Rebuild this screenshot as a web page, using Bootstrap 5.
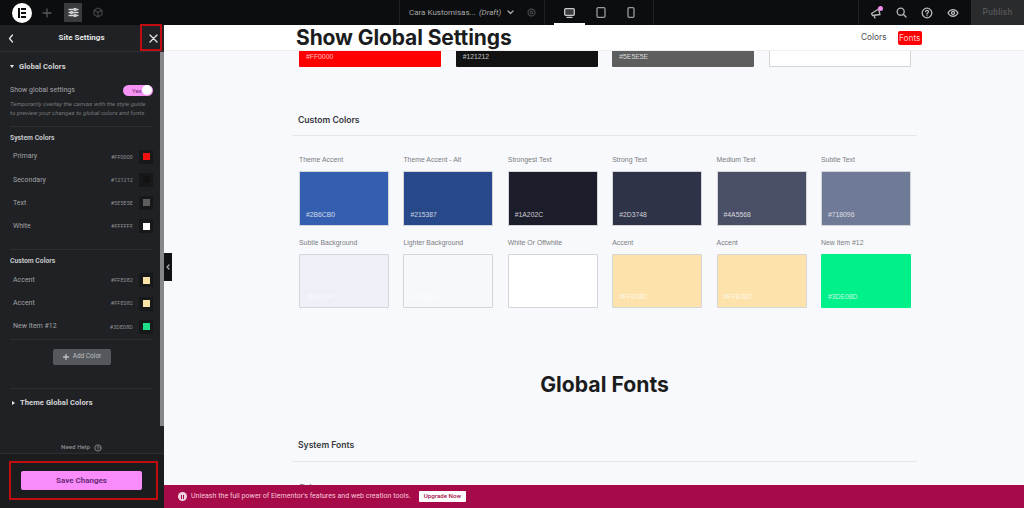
<!doctype html>
<html lang="en">
<head>
<meta charset="utf-8">
<title>Site Settings</title>
<link href="https://cdn.jsdelivr.net/npm/bootstrap@5.3.0/dist/css/bootstrap.min.css" rel="stylesheet">
<style>
html,body{height:508px;overflow:hidden}
body{font-family:Roboto,"Liberation Sans",sans-serif;background:#f8f9fc;display:flex;flex-direction:column}
.topbar{height:25px;background:#0c0d0e;color:#b9babc;flex:none}
.ic{display:block;fill:none;stroke:currentColor;stroke-width:1.3;stroke-linecap:round;stroke-linejoin:round}
.logo-disc{width:20px;height:20px;border-radius:50%;background:#fff;margin-left:12px;padding:5px 6px;display:flex;gap:1.5px}
.logo-disc i{display:block;background:#0c0d0e}
.logo-disc .bar-l{width:2px;height:10px}
.logo-disc .bar-r{width:6px;height:10px;background:repeating-linear-gradient(#0c0d0e 0 2px,#fff 2px 4px)}
.tb-plus{margin-left:10px;color:#55575a}
.tb-active{margin-left:12px;width:18px;height:19px;background:#3a3b3d;color:#d5d6d8;display:flex;align-items:center;justify-content:center}
.tb-layers{margin-left:11px;color:#3f4144}
.tb-title{margin-left:auto;width:146px;height:25px;border-left:1px solid #1e1f21;border-right:1px solid #1e1f21;padding-left:9px;font-size:8px;color:#a8a9ab;white-space:nowrap}
.tb-title em{margin-left:3px}
.tb-title .chev{margin-left:6px}
.tb-title .gear{margin-left:13px;color:#3f4144}
.tb-devices{width:109px;height:25px;border-right:1px solid #1e1f21;padding-left:19px;gap:21px;color:#9a9b9d;position:relative}
.dev-on{position:relative;color:#c8c9cb}
.dev-on::after{content:"";position:absolute;left:-10px;right:-10px;top:15px;height:2px;background:#fff}
.tb-gap{width:205px;height:25px;border-right:1px solid #1e1f21}
.tb-right{gap:14px;padding-left:11px;width:112px;color:#b9babc}
.tb-mega{position:relative}
.tb-mega::after{content:"";position:absolute;right:-1px;top:-1px;width:5px;height:5px;border-radius:50%;background:#f08df0}
.tb-publish{width:53px;height:25px;background:#2a2b2c;color:#55565a;font-size:8.5px;font-weight:500;text-align:center;line-height:25px;letter-spacing:.2px}
.workspace{flex:1;min-height:0;display:flex}
.side{width:164px;flex:none;background:#1f2124;color:#c8c9cb;display:flex;flex-direction:column;position:relative}
.side-head{height:27px;border-bottom:1px solid #2f3134;padding:0 6px 0 8px;color:#e2e3e5;font-size:8px;font-weight:700}
.side-scroll{flex:1;min-height:0;padding:0 11px 0 10px;overflow:hidden;position:relative}
.thumb{position:absolute;top:0;right:0;width:4px;height:374px;background:#85878a}
.sec-title{font-size:7.5px;font-weight:700;color:#d5d6d8;letter-spacing:.1px;line-height:10px}
.tri-d{width:0;height:0;border-left:2.5px solid transparent;border-right:2.5px solid transparent;border-top:3px solid #e8e8e8}
.tri-r{width:0;height:0;border-top:2.5px solid transparent;border-bottom:2.5px solid transparent;border-left:3px solid #e8e8e8}
.global-h{height:28px;padding-top:1px;gap:5px}
.show-row{height:14px;margin-top:3px;font-size:7px;color:#a4a5a8}
.switch{width:30px;height:11px;border-radius:6px;background:#f694f6;color:#7a2a7a;font-size:6px;padding:0 1px 0 9px;display:flex;align-items:center;justify-content:space-between}
.switch i{display:block;width:10px;height:10px;border-radius:50%;background:#fff}
.hint{font-size:6.2px;line-height:9px;color:#77797c;font-style:italic;margin:3px 0 0;white-space:nowrap}
.rule{border-top:1px solid #2c2e31;margin:0}
.sub-h{font-size:6.8px;font-weight:700;color:#c4c5c7;line-height:9px}
.swatch-row{height:23.2px;padding-left:3px;font-size:7px;color:#a2a3a6}
.swatch-row .hx{font-size:5.4px;margin-left:auto;color:#8e8f92;letter-spacing:.1px}
.chip-box{width:14px;height:14px;margin-left:6px;background:#17181a;display:flex;align-items:center;justify-content:center}
.chip-box i{display:block;width:7px;height:7px}
.add-btn{display:flex;align-items:center;justify-content:center;gap:4px;width:58px;height:16px;background:#55585d;color:#bfc0c2;font-size:6.5px;border-radius:2px;margin:9px auto 0 43px}
.need{height:13px;font-size:6.2px;color:#8d8e91;margin-top:33px;gap:4px;justify-content:center;font-weight:500}
.side-foot{height:55px;flex:none;background:#1b1c1e;border-top:1px solid #2c2e31;padding:17px 22px 0 21px}
.save-btn{height:19px;background:#fa8bfa;border-radius:2px;color:#6b2a7a;font-size:8px;font-weight:700;line-height:19px;text-align:center}
.mark-box{position:absolute;border:2px solid #c00d12;pointer-events:none}
.mark-x{left:140px;top:-1px;width:22px;height:27px}
.mark-save{left:9px;top:436px;width:149px;height:39px}
.collapse-tab{position:absolute;left:164px;top:228px;width:8px;height:28px;background:#111214;color:#aaa;z-index:2;display:flex;align-items:center;justify-content:center}
.canvas{flex:1;min-width:0;display:flex;flex-direction:column;background:#f8f9fc}
.site-head{height:26px;background:#fff;flex:none;padding:0 102px 0 132px;border-bottom:1px solid #f0f0f2}
.site-title{font-family:Inter,"Liberation Sans",sans-serif;font-weight:700;font-size:21px;line-height:26px;color:#1b1c1e;margin:0;letter-spacing:-.1px;white-space:nowrap;padding-top:1px}
.head-link{font-family:Inter,"Liberation Sans",sans-serif;font-size:8.3px;color:#4a4c50;margin-right:1px}
.head-on{font-family:Inter,"Liberation Sans",sans-serif;font-size:8.3px;background:#ff0000;color:#f8c9c9;padding:1px 1.5px;border-radius:2px;margin-left:10px;line-height:12px}
.page{flex:1;min-height:0;overflow:hidden;padding:0 107px 0 128px}
.wrap4{display:flex;justify-content:space-between;padding:0 6px 0 7px;height:16px}
.sw4{width:142px;height:16px;border-bottom-left-radius:1px;border-bottom-right-radius:1px;font-size:6.8px;color:rgba(255,255,255,.75);padding-left:7px;line-height:12px;font-family:"Liberation Sans",sans-serif}
.sec-h{font-family:Inter,"Liberation Sans",sans-serif;font-weight:600;font-size:8.6px;color:#33353a;line-height:12px;padding-left:6px}
.sec-rule{border-top:1px solid #e6e7ea;margin:0}
.swatches{display:grid;grid-template-columns:repeat(6,90px);column-gap:14.4px;padding-left:7px;row-gap:12px}
.cell-lbl{font-family:"Liberation Sans",sans-serif;font-size:6.9px;line-height:10px;color:#7a7c80;white-space:nowrap;margin-bottom:6px}
.cell-sw{height:54.5px;border:1px solid #d3d5d9;border-radius:1px;font-family:"Liberation Sans",sans-serif;font-size:6.8px;color:rgba(255,255,255,.78);padding:0 0 5px 6px;display:flex;align-items:flex-end;line-height:10px}
.big-h{font-family:Inter,"Liberation Sans",sans-serif;font-weight:700;font-size:21.2px;line-height:24px;color:#1b1c1e;text-align:center;margin:0}
.prim{font-family:Inter,"Liberation Sans",sans-serif;font-size:10px;color:#7a7c80;padding-left:7px;line-height:12px}
.banner{height:23px;flex:none;background:#a70a48;color:#f3c6d8;padding-left:14px;font-size:7.1px;gap:4px}
.banner-logo{width:9px;height:9px;border-radius:50%;background:#f1d4e0;display:flex;gap:.5px;padding:2.5px;align-items:stretch}
.banner-logo i{display:block;width:1.500px;background:#a70a48}
.banner-btn{background:#fff;color:#a70a48;font-size:6.2px;padding:0 5px;height:11px;line-height:11px;margin-left:4px;border-radius:1px;font-weight:500}
</style>
</head>
<body>
<header class="topbar d-flex align-items-center">
  <span class="logo-disc"><i class="bar-l"></i><i class="bar-r"></i></span>
  <span class="tb-plus"><svg class="ic" width="10" height="10" viewBox="0 0 10 10"><path d="M5 1v8M1 5h8"/></svg></span>
  <span class="tb-active"><svg class="ic" width="11" height="11" viewBox="0 0 11 11" stroke-width="1"><path d="M1 2.500h9M1 5.500h9M1 8.500h9"/><circle cx="7" cy="2.500" r="1" fill="#3a3b3d"/><circle cx="3.500" cy="5.500" r="1" fill="#3a3b3d"/><circle cx="7" cy="8.500" r="1" fill="#3a3b3d"/></svg></span>
  <span class="tb-layers"><svg class="ic" width="10" height="11" viewBox="0 0 10 11"><path d="M5 1l4 2.200v4.600L5 10 1 7.800V3.200zM1 3.200l4 2.200 4-2.200M5 5.400V10"/></svg></span>
  <div class="tb-title d-flex align-items-center">Cara Kustomisas... <em>(Draft)</em>
    <svg class="ic chev" width="7" height="5" viewBox="0 0 7 5"><path d="M1 1l2.500 2.500L6 1"/></svg>
    <svg class="ic gear" width="9" height="9" viewBox="0 0 9 9"><circle cx="4.500" cy="4.500" r="3.500" stroke-dasharray="2 .6"/><circle cx="4.500" cy="4.500" r="1.300"/></svg>
  </div>
  <div class="tb-devices d-flex align-items-center">
    <span class="dev-on"><svg class="ic" width="11" height="10" viewBox="0 0 11 10"><rect x=".7" y=".7" width="9.600" height="6.600" rx="1" fill="currentColor" fill-opacity=".25"/><path d="M3 9.300h5"/></svg></span>
    <svg class="ic" width="10" height="11" viewBox="0 0 10 11"><rect x="1" y=".7" width="8" height="9.600" rx="1.200"/></svg>
    <svg class="ic" width="8" height="11" viewBox="0 0 8 11"><rect x="1" y=".7" width="6" height="9.600" rx="1.200"/></svg>
  </div>
  <div class="tb-gap"></div>
  <div class="tb-right d-flex align-items-center">
    <span class="tb-mega"><svg class="ic" width="12" height="12" viewBox="0 0 12 12"><path d="M1.500 6.500l7-4.500 1.500 5.500-7.500 1zM4 8.500l1 2.500"/></svg></span>
    <svg class="ic" width="11" height="11" viewBox="0 0 11 11"><circle cx="4.700" cy="4.700" r="3.500"/><path d="M7.300 7.300L10 10"/></svg>
    <svg class="ic" width="12" height="12" viewBox="0 0 12 12"><circle cx="6" cy="6" r="4.800"/><path d="M4.600 4.700c.2-1.700 2.900-1.600 2.900 0 0 1.100-1.500 1.100-1.500 2.300M6 8.700v.1"/></svg>
    <svg class="ic" width="12" height="10" viewBox="0 0 12 10"><path d="M1 5c2.500-4.500 7.500-4.500 10 0-2.500 4.500-7.500 4.500-10 0z"/><circle cx="6" cy="5" r="1.500"/></svg>
  </div>
  <div class="tb-publish">Publish</div>
</header>
<div class="workspace position-relative">
  <aside class="side">
    <div class="side-head d-flex align-items-center justify-content-between">
      <svg class="ic" width="6" height="9" viewBox="0 0 6 9" stroke-width="1.800"><path d="M4.500 1L1.500 4.500l3 3.500"/></svg>
      <span>Site Settings</span>
      <svg class="ic" width="9" height="9" viewBox="0 0 9 9" stroke-width="1.600"><path d="M1 1l7 7M8 1L1 8"/></svg>
    </div>
    <div class="side-scroll">
      <div class="thumb"></div>
      <div class="global-h d-flex align-items-center"><span class="tri-d"></span><span class="sec-title">Global Colors</span></div>
      <div class="show-row d-flex align-items-center justify-content-between"><span>Show global settings</span><span class="switch"><span>Yes</span><i></i></span></div>
      <p class="hint">Temporarily overlay the canvas with the style guide<br>to preview your changes to global colors and fonts.</p>
      <div class="rule mt-2"></div>
      <div class="sub-h" style="margin-top:7px">System Colors</div>
      <div style="margin-top:2px">
        <div class="swatch-row d-flex align-items-center"><span>Primary</span><span class="hx">#FF0000</span><span class="chip-box"><i style="background:#f01010"></i></span></div>
        <div class="swatch-row d-flex align-items-center"><span>Secondary</span><span class="hx">#121212</span><span class="chip-box"><i style="background:#121212"></i></span></div>
        <div class="swatch-row d-flex align-items-center"><span>Text</span><span class="hx">#5E5E5E</span><span class="chip-box"><i style="background:#5e5e5e"></i></span></div>
        <div class="swatch-row d-flex align-items-center"><span>White</span><span class="hx">#FFFFFF</span><span class="chip-box"><i style="background:#fff"></i></span></div>
      </div>
      <div class="rule" style="margin-top:11px"></div>
      <div class="sub-h" style="margin-top:7px">Custom Colors</div>
      <div style="margin-top:3px">
        <div class="swatch-row d-flex align-items-center"><span>Accent</span><span class="hx">#FFE082</span><span class="chip-box"><i style="background:#fbe2a6"></i></span></div>
        <div class="swatch-row d-flex align-items-center"><span>Accent</span><span class="hx">#FFE082</span><span class="chip-box"><i style="background:#fbe2a6"></i></span></div>
        <div class="swatch-row d-flex align-items-center"><span>New Item #12</span><span class="hx">#3DE08D</span><span class="chip-box"><i style="background:#1fe08a"></i></span></div>
      </div>
      <div class="rule" style="margin-top:1px"></div>
      <div class="add-btn"><svg class="ic" width="6" height="6" viewBox="0 0 6 6"><path d="M3 .5v5M.5 3h5"/></svg>Add Color</div>
      <div class="rule" style="margin-top:23px"></div>
      <div class="d-flex align-items-center" style="gap:5px;margin-top:9px;height:10px;padding-left:2px"><span class="tri-r"></span><span class="sec-title">Theme Global Colors</span></div>
      <div class="need d-flex align-items-center">Need Help <svg class="ic" width="8" height="8" viewBox="0 0 12 12"><circle cx="6" cy="6" r="4.800"/><path d="M4.600 4.700c.2-1.700 2.900-1.600 2.900 0 0 1.100-1.500 1.100-1.500 2.300M6 8.700v.1"/></svg></div>
    </div>
    <div class="side-foot"><div class="save-btn">Save Changes</div></div>
  </aside>
  <div class="mark-box mark-x"></div>
  <div class="mark-box mark-save"></div>
  <div class="collapse-tab"><svg class="ic" width="4" height="6" viewBox="0 0 4 6"><path d="M3 1L1 3l2 2"/></svg></div>
  <main class="canvas">
    <div class="site-head d-flex align-items-center justify-content-between">
      <h1 class="site-title">Show Global Settings</h1>
      <div class="d-flex align-items-center"><span class="head-link">Colors</span><span class="head-on">Fonts</span></div>
    </div>
    <div class="page">
      <div class="wrap4">
        <div class="sw4" style="background:#ff0000">#FF0000</div>
        <div class="sw4" style="background:#121212">#121212</div>
        <div class="sw4" style="background:#5e5e5e">#5E5E5E</div>
        <div class="sw4" style="background:#fff;border:1px solid #d3d5d9;border-top:0"></div>
      </div>
      <div class="sec-h" style="margin-top:47px">Custom Colors</div>
      <div class="sec-rule" style="margin-top:9px"></div>
      <div class="swatches" style="margin-top:19px">
        <div><div class="cell-lbl">Theme Accent</div><div class="cell-sw" style="background:#345eb0">#2B6CB0</div></div>
        <div><div class="cell-lbl">Theme Accent - Alt</div><div class="cell-sw" style="background:#27498a">#215387</div></div>
        <div><div class="cell-lbl">Strongest Text</div><div class="cell-sw" style="background:#1b1d2b">#1A202C</div></div>
        <div><div class="cell-lbl">Strong Text</div><div class="cell-sw" style="background:#2e3348">#2D3748</div></div>
        <div><div class="cell-lbl">Medium Text</div><div class="cell-sw" style="background:#4a4f68">#4A5568</div></div>
        <div><div class="cell-lbl">Subtle Text</div><div class="cell-sw" style="background:#6f7a96">#718096</div></div>
        <div><div class="cell-lbl">Subtle Background</div><div class="cell-sw" style="background:#edf0f7">#EDF2F7</div></div>
        <div><div class="cell-lbl">Lighter Background</div><div class="cell-sw" style="background:#f7f8fc">#F7FAFC</div></div>
        <div><div class="cell-lbl">White Or Offwhite</div><div class="cell-sw" style="background:#fff">#FFFFFF</div></div>
        <div><div class="cell-lbl">Accent</div><div class="cell-sw" style="background:#fde2ac">#FFE082</div></div>
        <div><div class="cell-lbl">Accent</div><div class="cell-sw" style="background:#fde2ac">#FFE082</div></div>
        <div><div class="cell-lbl">New Item #12</div><div class="cell-sw" style="background:#00f08a;border-color:#00f08a">#3DE08D</div></div>
      </div>
      <h2 class="big-h" style="margin-top:64px">Global Fonts</h2>
      <div class="sec-h" style="margin-top:43px">System Fonts</div>
      <div class="sec-rule" style="margin-top:10px"></div>
      <div class="prim" style="margin-top:20px">Primary</div>
    </div>
    <div class="banner d-flex align-items-center">
      <span class="banner-logo"><i></i><i></i></span>
      <span>Unleash the full power of Elementor's features and web creation tools.</span>
      <span class="banner-btn">Upgrade Now</span>
    </div>
  </main>
</div>
<script src="https://cdn.jsdelivr.net/npm/bootstrap@5.3.0/dist/js/bootstrap.bundle.min.js"></script>
</body>
</html>
